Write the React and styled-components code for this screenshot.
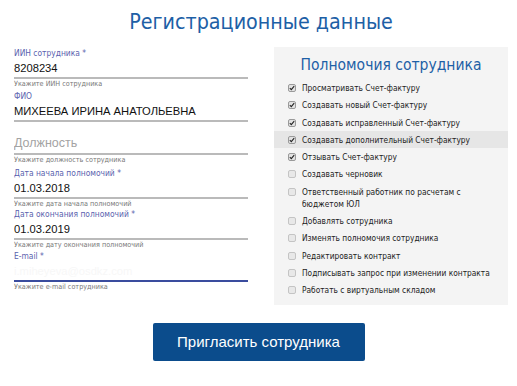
import React from "react";
import styled, { createGlobalStyle } from "styled-components";

const Global = createGlobalStyle`
  html, body { margin: 0; padding: 0; background: #fff; }
  body { width: 517px; height: 386px; overflow: hidden; }
`;

const Page = styled.div`
  width: 517px;
  display: flex;
  flex-direction: column;
  align-items: center;
`;

const Title = styled.h1`
  margin: 8px 0 0 5px;
  height: 39px;
  font-family: "DejaVu Sans Condensed", "DejaVu Sans", sans-serif;
  font-weight: normal;
  font-size: 21.3px;
  line-height: 28px;
  color: #1d60a6;
`;

const Columns = styled.div`
  width: 100%;
  box-sizing: border-box;
  padding: 0 9px 0 14px;
  display: grid;
  grid-template-columns: 234px 234px;
  column-gap: 26px;
`;

const Form = styled.div`
  display: flex;
  flex-direction: column;
`;

const Field = styled.div`
  display: flex;
  flex-direction: column;
  margin-top: ${(p) => p.$mt || 0}px;
`;

const Label = styled.div`
  font-family: "DejaVu Sans Condensed", "DejaVu Sans", sans-serif;
  font-size: 8.4px;
  line-height: 12px;
  color: #5a5fae;
`;

const Input = styled.div`
  font-family: "Liberation Sans", Arial, sans-serif;
  font-size: ${(p) => (p.$placeholder ? "12.5px" : "11.2px")};
  line-height: ${(p) => (p.$placeholder ? "18px" : "15px")};
  padding: 2px 0 1px;
  color: ${(p) => (p.$placeholder ? "#a3a3a3" : p.$hidden ? "#f7f7f7" : "#111")};
  border-bottom: 2px solid ${(p) => (p.$active ? "#3a4c9e" : "#bababa")};
  white-space: nowrap;
  overflow: hidden;
`;

const Helper = styled.div`
  font-family: "DejaVu Sans Condensed", "DejaVu Sans", sans-serif;
  font-size: 7.2px;
  line-height: 9px;
  color: #777;
  white-space: nowrap;
`;

const Panel = styled.div`
  background: #f4f4f4;
  padding: 7px 0 6px;
  display: flex;
  flex-direction: column;
`;

const PanelTitle = styled.div`
  text-align: center;
  font-family: "DejaVu Sans Condensed", "DejaVu Sans", sans-serif;
  font-size: 15.5px;
  line-height: 22px;
  color: #1d60a6;
  margin-bottom: 3px;
`;

const Row = styled.div`
  display: flex;
  align-items: flex-start;
  gap: 6px;
  padding: 3px 14px 2.3px;
  background: ${(p) => (p.$hover ? "#e6e6e6" : "transparent")};
`;

const Box = styled.span`
  flex: none;
  width: 8px;
  height: 8px;
  margin-top: 2px;
  border-radius: 2px;
  box-sizing: border-box;
  border: 1px solid ${(p) => (p.$checked ? "#9a9a9a" : "#c4c4c4")};
  background: ${(p) => (p.$checked ? "#e2e2e2" : "#e8e8e8")};
  display: flex;
  align-items: center;
  justify-content: center;
`;

const RowText = styled.span`
  font-family: "DejaVu Sans Condensed", "DejaVu Sans", sans-serif;
  font-size: 8.3px;
  line-height: 12px;
  color: #222;
`;

const ButtonWrap = styled.div`
  display: flex;
  justify-content: center;
  margin-top: 18px;
`;

const Button = styled.button`
  width: 212px;
  height: 38px;
  padding: 0;
  border: none;
  border-radius: 2px;
  background: #0b4c8c;
  color: #fff;
  font-family: "Liberation Sans", Arial, sans-serif;
  font-size: 15px;
  cursor: pointer;
`;

const Check = () => (
  <svg width="6" height="6" viewBox="0 0 6 6">
    <path d="M0.8 3.1 L2.3 4.6 L5.2 1.2" fill="none" stroke="#222" strokeWidth="1.1" />
  </svg>
);

const perms = [
  ["Просматривать Счет-фактуру", true],
  ["Создавать новый Счет-фактуру", true],
  ["Создавать исправленный Счет-фактуру", true],
  ["Создавать дополнительный Счет-фактуру", true, true],
  ["Отзывать Счет-фактуру", true],
  ["Создавать черновик", false],
  ["Ответственный работник по расчетам с бюджетом ЮЛ", false],
  ["Добавлять сотрудника", false],
  ["Изменять полномочия сотрудника", false],
  ["Редактировать контракт", false],
  ["Подписывать запрос при изменении контракта", false],
  ["Работать с виртуальным складом", false],
];

export default function App() {
  return (
    <Page>
      <Global />
      <Title>Регистрационные данные</Title>
      <Columns>
        <Form>
          <Field>
            <Label>ИИН сотрудника *</Label>
            <Input>8208234</Input>
            <Helper>Укажите ИИН сотрудника</Helper>
          </Field>
          <Field $mt={2}>
            <Label>ФИО</Label>
            <Input>МИХЕЕВА ИРИНА АНАТОЛЬЕВНА</Input>
          </Field>
          <Field $mt={10}>
            <Input $placeholder>Должность</Input>
            <Helper>Укажите должность сотрудника</Helper>
          </Field>
          <Field $mt={3}>
            <Label>Дата начала полномочий *</Label>
            <Input>01.03.2018</Input>
            <Helper>Укажите дата начала полномочий</Helper>
          </Field>
          <Field>
            <Label>Дата окончания полномочий *</Label>
            <Input>01.03.2019</Input>
            <Helper>Укажите дату окончания полномочий</Helper>
          </Field>
          <Field $mt={1}>
            <Label>E-mail *</Label>
            <Input $hidden $active>i.miheyeva@osdkz.com</Input>
            <Helper>Укажите e-mail сотрудника</Helper>
          </Field>
        </Form>
        <Panel>
          <PanelTitle>Полномочия сотрудника</PanelTitle>
          {perms.map(([text, checked, hover]) => (
            <Row key={text} $hover={hover}>
              <Box $checked={checked}>{checked && <Check />}</Box>
              <RowText>{text}</RowText>
            </Row>
          ))}
        </Panel>
      </Columns>
      <ButtonWrap>
        <Button>Пригласить сотрудника</Button>
      </ButtonWrap>
    </Page>
  );
}
